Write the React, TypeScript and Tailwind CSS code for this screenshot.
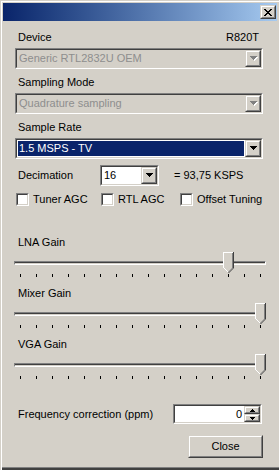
import React from "react";

const RAISED_OUT = "border border-t-[#d4d0c8] border-l-[#d4d0c8] border-b-[#404040] border-r-[#404040]";
const RAISED_IN = "border border-t-white border-l-white border-b-[#808080] border-r-[#808080] bg-[#d4d0c8]";
const SUNK_OUT = "border border-t-[#808080] border-l-[#808080] border-b-white border-r-white";
const SUNK_IN = "border border-t-[#404040] border-l-[#404040] border-b-[#d4d0c8] border-r-[#d4d0c8]";

function DownArrow({ disabled }: { disabled?: boolean }) {
  const rows = [
    [0, 7],
    [1, 5],
    [2, 3],
    [3, 1],
  ];
  return (
    <svg width="8" height="5" shapeRendering="crispEdges">
      {disabled &&
        rows.map(([x, w], i) => <rect key={"s" + i} x={x + 1} y={i + 1} width={w} height={1} fill="#ffffff" />)}
      {rows.map(([x, w], i) => (
        <rect key={i} x={x} y={i} width={w} height={1} fill={disabled ? "#808080" : "#000000"} />
      ))}
    </svg>
  );
}

function DropButton({ disabled }: { disabled?: boolean }) {
  return (
    <div className={`h-full w-[16px] ${RAISED_OUT}`}>
      <div className={`flex h-full items-center justify-center pl-[1px] ${RAISED_IN}`}>
        <DownArrow disabled={disabled} />
      </div>
    </div>
  );
}

function Combo({
  value,
  disabled,
  selected,
  className = "",
}: {
  value: string;
  disabled?: boolean;
  selected?: boolean;
  className?: string;
}) {
  const text = selected ? "bg-[#0a246a] text-white" : disabled ? "text-[#8e8e8e]" : "text-black";
  return (
    <div className={`flex h-[21px] ${SUNK_OUT} ${className}`}>
      <div className={`flex flex-1 ${SUNK_IN} ${disabled ? "bg-[#d4d0c8]" : "bg-white"}`}>
        <div className="flex min-w-0 flex-1 p-[1px]">
          <div className={`flex flex-1 items-center whitespace-nowrap pl-[1px] ${text}`}>{value}</div>
        </div>
        <DropButton disabled={disabled} />
      </div>
    </div>
  );
}

function Checkbox({ label }: { label: string }) {
  return (
    <div className="flex items-center gap-[4px]">
      <div className={`h-[13px] w-[13px] ${SUNK_OUT}`}>
        <div className={`h-full w-full bg-white ${SUNK_IN}`} />
      </div>
      <span>{label}</span>
    </div>
  );
}

function Thumb() {
  return (
    <svg width="11" height="21" shapeRendering="crispEdges">
      <polygon points="0,0 11,0 11,16 5.5,21 0,16" fill="#d4d0c8" />
      <polyline points="0.5,16 0.5,0.5 10,0.5" fill="none" stroke="#ffffff" />
      <line x1="1" y1="16" x2="5" y2="20" stroke="#ffffff" shapeRendering="auto" />
      <polyline points="9.5,1 9.5,15.5" fill="none" stroke="#808080" />
      <polyline points="10.5,0 10.5,16" fill="none" stroke="#404040" />
      <line x1="10.5" y1="16" x2="5.5" y2="21" stroke="#404040" shapeRendering="auto" />
      <line x1="9.5" y1="16" x2="5.5" y2="20" stroke="#808080" shapeRendering="auto" />
    </svg>
  );
}

function Slider({ value }: { value: number }) {
  return (
    <div className="relative ml-[-1px] h-[26px] w-[252px]">
      <div className="absolute left-0 right-0 top-[9px] h-[4px] border-t border-l border-t-[#808080] border-l-[#808080] border-b border-r border-b-white border-r-white">
        <div className="h-[1px] bg-[#404040]" />
      </div>
      <div className="absolute top-0" style={{ left: 6 + value * 16 - 5 }}>
        <Thumb />
      </div>
      <div className="absolute left-[6px] top-[22px] flex w-[241px] justify-between">
        {Array.from({ length: 16 }).map((_, i) => (
          <div key={i} className="h-[3px] w-[1px] bg-black" />
        ))}
      </div>
    </div>
  );
}

function CloseGlyph() {
  const cells: React.ReactNode[] = [];
  for (let i = 0; i < 7; i++) {
    cells.push(<rect key={"a" + i} x={i} y={i} width={2} height={1} fill="#000" />);
    cells.push(<rect key={"b" + i} x={6 - i} y={i} width={2} height={1} fill="#000" />);
  }
  return (
    <svg width="8" height="7" shapeRendering="crispEdges">
      {cells}
    </svg>
  );
}

function SpinArrow({ up }: { up?: boolean }) {
  const rows = up
    ? [
        [2, 1],
        [1, 3],
        [0, 5],
      ]
    : [
        [0, 5],
        [1, 3],
        [2, 1],
      ];
  return (
    <svg width="5" height="3" shapeRendering="crispEdges">
      {rows.map(([x, w], i) => (
        <rect key={i} x={x} y={i} width={w} height={1} fill="#000" />
      ))}
    </svg>
  );
}

export default function App() {
  return (
    <div className="h-[470px] w-[279px] bg-[#d4d0c8] pl-[3px] pr-[2px] pt-[3px] text-[11px] leading-[13px] text-black font-['Liberation_Sans',Arial,sans-serif] shadow-[inset_1px_1px_0_#d4d0c8,inset_2px_2px_0_#ffffff,inset_0_-2px_0_#404040,inset_0_-3px_0_#808080]">
      <div className="flex h-[18px] items-center justify-end bg-gradient-to-r from-[#0a246a] to-[#a6caf0] pr-[1px]">
        <div className={`h-[14px] w-[16px] ${RAISED_OUT}`}>
          <div className={`flex h-full items-center justify-center ${RAISED_IN}`}>
            <CloseGlyph />
          </div>
        </div>
      </div>

      <div className="ml-[12px] flex w-[248px] flex-col">
        <div className="mt-[10px] flex justify-between pl-[3px] pr-[4px]">
          <span>Device</span>
          <span>R820T</span>
        </div>
        <Combo className="mt-[4px]" value="Generic RTL2832U OEM" disabled />

        <div className="mt-[7px] pl-[3px]">Sampling Mode</div>
        <Combo className="mt-[4px]" value="Quadrature sampling" disabled />

        <div className="mt-[7px] pl-[3px]">Sample Rate</div>
        <Combo className="mt-[4px]" value="1.5 MSPS - TV" selected />

        <div className="mt-[6px] flex h-[21px] items-center">
          <span className="w-[85px] pl-[3px]">Decimation</span>
          <Combo className="w-[59px]" value="16" />
          <span className="ml-[15px]">= 93,75 KSPS</span>
        </div>

        <div className="mt-[7px] flex h-[13px] items-center pl-[1px]">
          <div className="w-[85px]">
            <Checkbox label="Tuner AGC" />
          </div>
          <div className="w-[79px]">
            <Checkbox label="RTL AGC" />
          </div>
          <Checkbox label="Offset Tuning" />
        </div>

        <div className="mt-[30px] pl-[3px]">LNA Gain</div>
        <div className="mt-[3px]">
          <Slider value={13} />
        </div>

        <div className="mt-[9px] pl-[3px]">Mixer Gain</div>
        <div className="mt-[3px]">
          <Slider value={15} />
        </div>

        <div className="mt-[9px] pl-[3px]">VGA Gain</div>
        <div className="mt-[3px]">
          <Slider value={15} />
        </div>

        <div className="mt-[24px] flex h-[20px] items-center justify-between">
          <span className="pl-[3px]">Frequency correction (ppm)</span>
          <div className={`mr-[1px] flex h-[20px] w-[89px] ${SUNK_OUT}`}>
            <div className={`flex flex-1 bg-white ${SUNK_IN}`}>
              <div className="flex flex-1 items-center justify-end pr-[2px]">0</div>
              <div className="flex w-[16px] flex-col">
                <div className={`h-[8px] ${RAISED_OUT}`}>
                  <div className={`flex h-full items-center justify-center ${RAISED_IN}`}>
                    <SpinArrow up />
                  </div>
                </div>
                <div className={`h-[8px] ${RAISED_OUT}`}>
                  <div className={`flex h-full items-center justify-center ${RAISED_IN}`}>
                    <SpinArrow />
                  </div>
                </div>
              </div>
            </div>
          </div>
        </div>

        <div className="mt-[11px] flex justify-end">
          <div className={`h-[23px] w-[75px] ${RAISED_OUT}`}>
            <div className={`flex h-full items-center justify-center ${RAISED_IN}`}>Close</div>
          </div>
        </div>
      </div>
    </div>
  );
}
